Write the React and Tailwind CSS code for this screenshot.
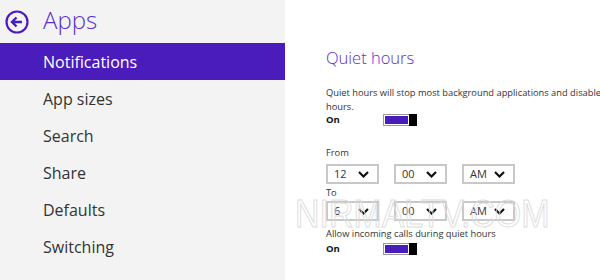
const menu = ["Notifications", "App sizes", "Search", "Share", "Defaults", "Switching"];

const Chevron = () => (
  <svg width="11" height="7" viewBox="0 0 11 7" className="shrink-0">
    <path d="M1 1l4.5 4.5L10 1" fill="none" stroke="#111" strokeWidth="2.2" />
  </svg>
);

const Select = ({ value }) => (
  <div className="w-[53px] h-[20px] border-2 border-[#c8c8c8] bg-white flex items-center justify-between pl-[6px] pr-[8px] text-[11px] text-[#333]">
    <span>{value}</span>
    <Chevron />
  </div>
);

const Toggle = () => (
  <div className="w-[34px] h-[12px] border border-[#9a9a9a] flex items-stretch">
    <div className="flex-1 m-[1px] bg-[#4a1cbc]" />
    <div className="w-[8px] bg-black -my-[1px] -mr-[1px]" />
  </div>
);

const App = () => {
  return (
    <div className="w-[600px] h-[280px] flex bg-white overflow-hidden relative font-['Open_Sans',sans-serif]">
      <div className="w-[285px] shrink-0 bg-[#f3f3f3] flex flex-col">
        <div className="h-[43px] flex items-center pl-[5px]">
          <svg width="24" height="24" viewBox="0 0 24 24">
            <circle cx="12" cy="12" r="10.5" fill="none" stroke="#4a1cbc" strokeWidth="2.2" />
            <path d="M17 12H7.5M11.5 7.5L7 12l4.5 4.5" fill="none" stroke="#4a1cbc" strokeWidth="2.4" />
          </svg>
          <span className="ml-[14px] text-[24px] leading-none text-[#5a2ed0] font-light -mt-[4px]">Apps</span>
        </div>
        {menu.map((item, i) => (
          <div
            key={item}
            className={`h-[37px] flex items-center pl-[43px] text-[16px] ${
              i === 0 ? "bg-[#4a1cbc] text-white" : "text-[#333]"
            }`}
          >
            {item}
          </div>
        ))}
      </div>

      <div className="flex-1 min-w-0 pl-[41px] pt-[45px] text-[#333] whitespace-nowrap">
        <div className="text-[16.5px] leading-[26px] text-[#5a2ed0] font-light">Quiet hours</div>
        <div className="mt-[15px] text-[9.3px] leading-[14px]">
          Quiet hours will stop most background applications and disable notifications during these
          <br />
          hours.
        </div>
        <div className="-mt-[2px] flex items-center h-[16px]">
          <span className="w-[57px] text-[9.5px] font-bold text-[#111]">On</span>
          <Toggle />
        </div>

        <div className="mt-[17px] text-[9.3px] leading-[15px]">From</div>
        <div className="mt-[4px] flex gap-[15px]">
          <Select value="12" />
          <Select value="00" />
          <Select value="AM" />
        </div>
        <div className="text-[9.3px] leading-[15px] mt-[1px]">To</div>
        <div className="mt-[1px] flex gap-[15px]">
          <Select value="6" />
          <Select value="00" />
          <Select value="AM" />
        </div>
        <div className="mt-[5px] text-[9.3px] leading-[15px]">Allow incoming calls during quiet hours</div>
        <div className="mt-[0px] flex items-center h-[16px]">
          <span className="w-[57px] text-[9.5px] font-bold text-[#111]">On</span>
          <Toggle />
        </div>
      </div>

      <div className="absolute left-[295px] top-[194px] text-[39px] leading-none text-transparent origin-left scale-x-[0.87] [-webkit-text-stroke:1px_#dcdcdc] pointer-events-none font-['Liberation_Sans',sans-serif]">
        NIRMALTV.COM
      </div>
    </div>
  );
};

export default App;
